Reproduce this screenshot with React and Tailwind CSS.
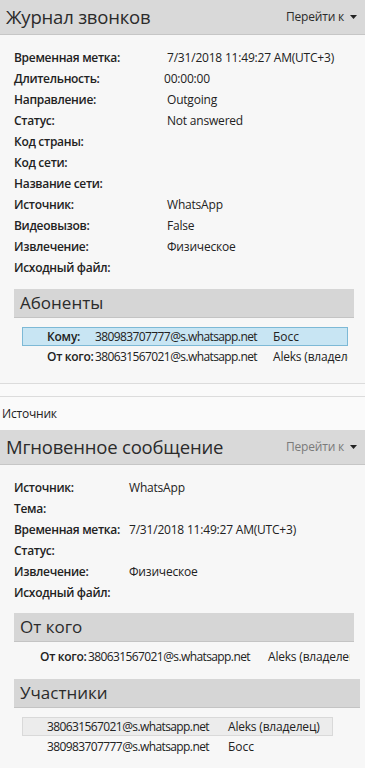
const font = { fontFamily: '"Open Sans", "Noto Sans", sans-serif' };

const callRows = [
  ["Временная метка:", "7/31/2018 11:49:27 AM(UTC+3)", ""],
  ["Длительность:", "00:00:00", "-ml-[3px]"],
  ["Направление:", "Outgoing", ""],
  ["Статус:", "Not answered", ""],
  ["Код страны:", "", ""],
  ["Код сети:", "", ""],
  ["Название сети:", "", ""],
  ["Источник:", "WhatsApp", ""],
  ["Видеовызов:", "False", ""],
  ["Извлечение:", "Физическое", ""],
  ["Исходный файл:", "", ""],
];

const msgRows = [
  ["Источник:", "WhatsApp"],
  ["Тема:", ""],
  ["Временная метка:", "7/31/2018 11:49:27 AM(UTC+3)"],
  ["Статус:", ""],
  ["Извлечение:", "Физическое"],
  ["Исходный файл:", ""],
];

function Header({ title, muted }) {
  return (
    <div className="flex items-center justify-between h-[35px] bg-[#d9d9d9] border-b border-[#c6c6c6] pl-[6px] pr-[8px]">
      <span className="text-[18.5px] text-[#2b2b2b] tracking-[-0.2px]">{title}</span>
      <span
        className={
          "flex items-center gap-[6px] text-[12px] tracking-[-0.2px] " +
          (muted ? "text-[#7a7a7a]" : "text-[#2b2b2b]")
        }
      >
        Перейти к
        <svg width="7" height="4" viewBox="0 0 7 4">
          <path d="M0 0h7L3.5 4z" fill="#222" />
        </svg>
      </span>
    </div>
  );
}

function SubHeader({ title, wide }) {
  return (
    <div
      className={
        "ml-[14px] h-[29px] bg-[#d6d6d6] border-b border-[#c4c4c4] pl-[6px] flex items-center text-[17px] text-[#2b2b2b] " +
        (wide ? "w-[346px]" : "w-[340px]")
      }
    >
      {title}
    </div>
  );
}

const email = "shrink-0 whitespace-nowrap tracking-[-0.6px]";

export default function App() {
  return (
    <div style={font} className="w-[365px] h-[768px] overflow-hidden bg-[#f7f7f7] text-[#222] text-[12px]">
      <div className="border-b border-[#dcdcdc] pb-[16px]">
        <Header title="Журнал звонков" />

        <div className="pt-[12px] pl-[14px]">
          {callRows.map(([label, value, shift]) => (
            <div key={label} className="flex h-[21px] items-center">
              <span className="w-[153px] shrink-0 font-semibold tracking-[-0.3px]">{label}</span>
              <span className={"tracking-[-0.2px] " + shift}>{value}</span>
            </div>
          ))}
        </div>

        <div className="mt-[11px]">
          <SubHeader title="Абоненты" />
        </div>

        <div className="mt-[9px] ml-[22px] w-[326px] overflow-hidden">
          <div className="flex items-center h-[19px] bg-[#c8e5f3] border border-[#7db9d6] whitespace-nowrap">
            <span className="w-[72px] shrink-0 pl-[24px] font-semibold tracking-[-0.2px]">Кому:</span>
            <span className={"w-[178px] " + email}>380983707777@s.whatsapp.net</span>
            <span>Босс</span>
          </div>
          <div className="flex items-center h-[21px] whitespace-nowrap">
            <span className="w-[73px] shrink-0 pl-[25px] font-semibold tracking-[-0.3px]">От кого:</span>
            <span className={"w-[178px] " + email}>380631567021@s.whatsapp.net</span>
            <span className="shrink-0 tracking-[-0.2px]">Aleks (владелец)</span>
          </div>
        </div>
      </div>

      <div className="h-[12px] bg-[#fafafa]" />

      <div className="border-t border-[#dcdcdc]">
        <div className="h-[33px] flex items-center pl-[2px] text-[12px] tracking-[-0.2px] bg-[#fafafa]">Источник</div>
        <Header title="Мгновенное сообщение" muted />

        <div className="pt-[12px] pl-[14px]">
          {msgRows.map(([label, value]) => (
            <div key={label} className="flex h-[21px] items-center">
              <span className="w-[115px] shrink-0 font-semibold tracking-[-0.3px]">{label}</span>
              <span className="tracking-[-0.2px]">{value}</span>
            </div>
          ))}
        </div>

        <div className="mt-[10px]">
          <SubHeader title="От кого" />
        </div>
        <div className="w-[350px] overflow-hidden">
          <div className="flex items-center h-[30px] pl-[40px] whitespace-nowrap">
            <span className="w-[48px] shrink-0 font-semibold tracking-[-0.3px]">От кого:</span>
            <span className={"w-[180px] " + email}>380631567021@s.whatsapp.net</span>
            <span className="shrink-0 tracking-[-0.2px]">Aleks (владелец)</span>
          </div>
        </div>

        <div className="mt-[7px]">
          <SubHeader title="Участники" wide />
        </div>

        <div className="mt-[9px] ml-[22px] w-[311px]">
          <div className="flex items-center h-[19px] bg-[#ececec] border border-[#d9d9d9] whitespace-nowrap">
            <span className={"w-[205px] pl-[24px] " + email}>380631567021@s.whatsapp.net</span>
            <span className="tracking-[-0.2px]">Aleks (владелец)</span>
          </div>
          <div className="flex items-center h-[21px] whitespace-nowrap">
            <span className={"w-[206px] pl-[25px] " + email}>380983707777@s.whatsapp.net</span>
            <span>Босс</span>
          </div>
        </div>
      </div>
    </div>
  );
}
